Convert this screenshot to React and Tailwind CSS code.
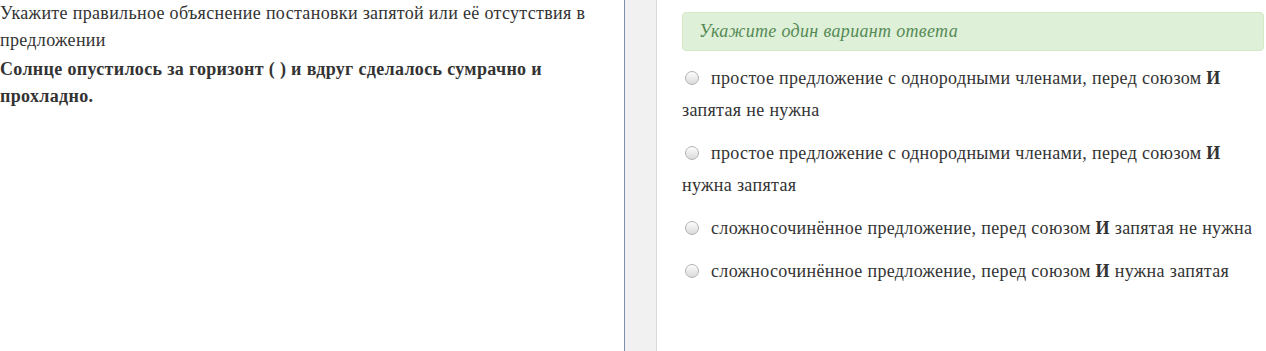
export default function App() {
  const options = [
    <>простое предложение с однородными членами, перед союзом <b>И</b> запятая не нужна</>,
    <>простое предложение с однородными членами, перед союзом <b>И</b> нужна запятая</>,
    <>сложносочинённое предложение, перед союзом <b>И</b> запятая не нужна</>,
    <>сложносочинённое предложение, перед союзом <b>И</b> нужна запятая</>,
  ];

  return (
    <div className="flex h-[351px] w-[1266px] bg-white text-[18px] text-[#333] font-['Liberation_Serif',serif] overflow-hidden">
      {/* question */}
      <div className="w-[624px] shrink-0 leading-[27px] tracking-[0.33px]">
        <p>Укажите правильное объяснение постановки запятой или её отсутствия в предложении</p>
        <p className="mt-[2px] font-bold">Солнце опустилось за горизонт ( ) и вдруг сделалось сумрачно и прохладно.</p>
      </div>

      {/* divider */}
      <div className="w-[33px] shrink-0 border-l border-r border-l-[#7d8db0] border-r-[#d9d9d9] bg-[#f1f1f1]"></div>

      {/* answers */}
      <div className="flex-1 pl-[25px] pr-[2px] pt-[12px] tracking-[0.33px]">
        <div className="rounded border border-[#d6e9c6] bg-[#dff0d8] px-[16px] py-[7px] leading-[23px] italic text-[#548a55]">
          Укажите один вариант ответа
        </div>
        <div className="mt-[11px] flex flex-col gap-[11px]">
          {options.map((o, i) => (
            <label key={i} className="block leading-[32px]">
              <span className="ml-[3px] mr-[12px] inline-block h-[14px] w-[14px] rounded-full border border-[#b3b3b3] bg-gradient-to-b from-[#fdfdfd] to-[#dadada] align-[-1px]"></span>
              {o}
            </label>
          ))}
        </div>
      </div>
    </div>
  );
}
